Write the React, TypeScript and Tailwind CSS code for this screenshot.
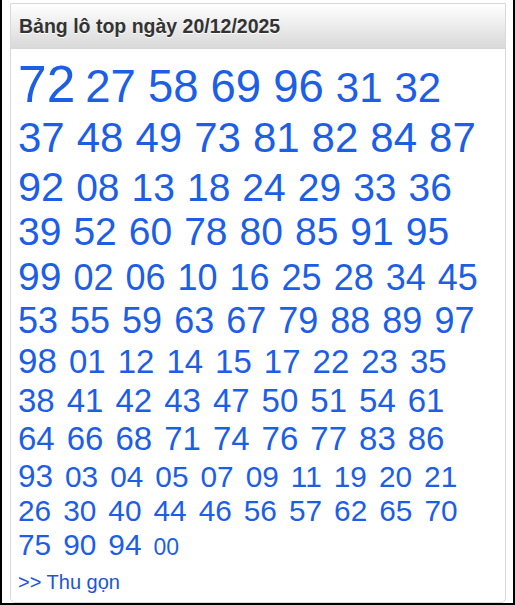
import React from "react";

// Top numbers for the day, most frequent first; each entry is [numbers, font size in px]
const groups: [string[], number][] = [
  [["72"], 51.5],
  [["27", "58", "69", "96"], 45.5],
  [["31", "32", "37", "48", "49", "73", "81", "82", "84", "87"], 42],
  [["92"], 41.5],
  [["08", "13", "18", "24", "29", "33", "36", "39", "52", "60", "78", "80", "85", "91", "95"], 39],
  [["99"], 39],
  [["02", "06", "10", "16", "25", "28", "34", "45", "53", "55", "59", "63", "67", "79", "88", "89", "97"], 36],
  [["98"], 35],
  [
    ["01", "12", "14", "15", "17", "22", "23", "35", "38", "41", "42", "43", "47", "50", "51", "54", "61", "64", "66", "68", "71", "74", "76", "77", "83", "86"],
    33,
  ],
  [["93"], 31.5],
  [["03", "04", "05", "07", "09", "11", "19", "20", "21", "26", "30", "40", "44", "46", "56", "57", "62", "65", "70", "75", "90", "94"], 29.8],
  [["00"], 23],
];

const items = groups.flatMap(([nums, size]) => nums.map((n) => ({ n, size })));

export default function App() {
  return (
    <div className="w-[515px] h-[605px] border-2 border-t-0 border-black bg-white pl-2 pr-[7px] pt-[3px] font-['Liberation_Sans',Arial,sans-serif]">
      <div className="h-full flex flex-col border border-[#d9d9d9] rounded-b-[5px] overflow-hidden">
        <div className="h-[45px] shrink-0 flex items-center px-2 bg-gradient-to-b from-white to-[#d8d8d8]">
          <h2 className="text-[19.5px] font-bold text-[#333333] [text-shadow:0_1px_0_#ffffff]">
            Bảng lô top ngày 20/12/2025
          </h2>
        </div>
        <div className="flex-1 pl-[7px] pr-[17px] pt-[6px] text-[#1d5ee6]">
          <div className="flex flex-wrap items-baseline gap-x-3">
            {items.map(({ n, size }, i) => (
              <span
                key={n}
                className={i === 0 ? "leading-[1.15] -mr-[2px]" : "leading-[1.15]"}
                style={{ fontSize: size }}
              >
                {n}
              </span>
            ))}
          </div>
          <a href="#" className="block mt-[9px] text-[20px] leading-[1.15] text-[#1a56d6]">
            &gt;&gt; Thu gọn
          </a>
        </div>
      </div>
    </div>
  );
}
